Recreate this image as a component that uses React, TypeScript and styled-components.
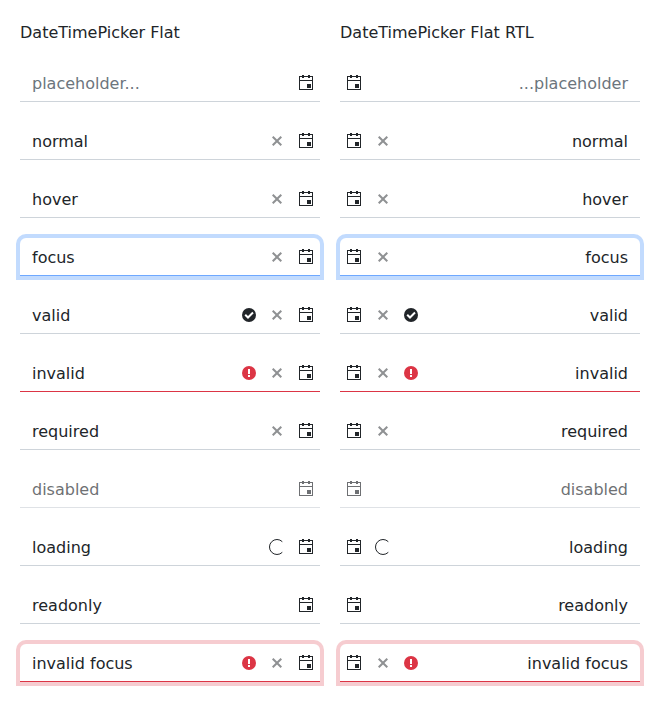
import React from 'react';
import styled, { createGlobalStyle, css } from 'styled-components';

const GlobalStyle = createGlobalStyle`
  body {
    margin: 0;
    background: #fff;
    color: #212529;
    font: 16px/24px "DejaVu Sans", sans-serif;
  }
`;

const Page = styled.main`
  display: grid;
  grid-template-columns: 300px 300px;
  gap: 20px;
  padding: 20px;
`;

const Column = styled.section`
  display: flex;
  flex-direction: column;
  gap: 20px;
`;

const Title = styled.div`
  box-sizing: border-box;
  height: 24px;
  padding-top: 1px;
`;

type Look = 'normal' | 'focus' | 'invalid' | 'disabled' | 'invalidFocus';

const looks = {
  normal: css``,
  focus: css`
    border-color: #6ea8ff;
    box-shadow: 0 0 0 4px rgba(13, 110, 253, 0.25);
  `,
  invalid: css`
    border-color: #dc3545;
  `,
  disabled: css`
    opacity: 0.65;
  `,
  invalidFocus: css`
    border-color: #dc3545;
    box-shadow: 0 0 0 4px rgba(220, 53, 69, 0.25);
  `,
};

const Field = styled.div<{ $look: Look }>`
  box-sizing: border-box;
  display: flex;
  align-items: center;
  height: 38px;
  border-bottom: 1px solid #ced4da;
  border-radius: 6px 6px 0 0;
  ${(p) => looks[p.$look]}
`;

const Value = styled.span<{ $placeholder?: boolean }>`
  flex: 1;
  padding: 2px 12px 0;
  color: ${(p) => (p.$placeholder ? '#6c757d' : 'inherit')};
`;

const Slot = styled.span<{ $width: number }>`
  display: flex;
  justify-content: center;
  width: ${(p) => p.$width}px;
  padding-top: 1px;
`;

const Icon = styled.svg`
  display: block;
  flex: none;
  width: 16px;
  height: 16px;
`;

const ClearIcon = styled(Icon)`
  opacity: 0.5;
`;

const Calendar = () => (
  <Icon viewBox="0 0 16 16" fill="currentColor">
    <path d="M1 1h3V0h2v1h4V0h2v1h3v14H1zM2 2v3h12V2h-2v1h-2V2H6v1H4V2zM2 6v8h12V6zM9 9h4v4H9z" fillRule="evenodd" />
  </Icon>
);

const Clear = () => (
  <ClearIcon viewBox="0 0 16 16" fill="currentColor">
    <path d="M13 4.416 11.584 3 8 6.584 4.416 3 3 4.416 6.584 8 3 11.584 4.416 13 8 9.416 11.584 13 13 11.584 9.416 8z" />
  </ClearIcon>
);

const Valid = () => (
  <Icon viewBox="0 0 16 16">
    <circle cx="8" cy="8" r="7" fill="#212529" />
    <path d="M4.2 7.7 7 10.5l5-5" fill="none" stroke="#fff" strokeWidth="2" />
  </Icon>
);

const Invalid = () => (
  <Icon viewBox="0 0 16 16">
    <circle cx="8" cy="8" r="7" fill="#dc3545" />
    <path d="M7 4h2v5H7zM7 10h2v2H7z" fill="#fff" />
  </Icon>
);

const Loading = () => (
  <Icon viewBox="0 0 16 16">
    <path d="M13.3 2.7a7.5 7.5 0 1 0 0 10.6" fill="none" stroke="currentColor" />
  </Icon>
);

interface Row {
  text: string;
  look?: Look;
  placeholder?: boolean;
  clear?: boolean;
  status?: 'valid' | 'invalid';
  loading?: boolean;
}

const rows: Row[] = [
  { text: 'placeholder...', placeholder: true },
  { text: 'normal', clear: true },
  { text: 'hover', clear: true },
  { text: 'focus', clear: true, look: 'focus' },
  { text: 'valid', clear: true, status: 'valid' },
  { text: 'invalid', clear: true, status: 'invalid', look: 'invalid' },
  { text: 'required', clear: true },
  { text: 'disabled', look: 'disabled' },
  { text: 'loading', loading: true },
  { text: 'readonly' },
  { text: 'invalid focus', clear: true, status: 'invalid', look: 'invalidFocus' },
];

const DateTimePicker = ({ text, look = 'normal', placeholder, clear, status, loading }: Row) => (
  <Field $look={look}>
    <Value $placeholder={placeholder}>{text}</Value>
    {status && <Slot $width={26}>{status === 'valid' ? <Valid /> : <Invalid />}</Slot>}
    {(clear || loading) && <Slot $width={30}>{clear ? <Clear /> : <Loading />}</Slot>}
    <Slot $width={28}>
      <Calendar />
    </Slot>
  </Field>
);

const Pickers = ({ title, rtl }: { title: string; rtl?: boolean }) => (
  <Column dir={rtl ? 'rtl' : 'ltr'}>
    <Title dir="ltr">{title}</Title>
    {rows.map((row) => (
      <DateTimePicker key={row.text} {...row} />
    ))}
  </Column>
);

export default function App() {
  return (
    <>
      <GlobalStyle />
      <Page>
        <Pickers title="DateTimePicker Flat" />
        <Pickers title="DateTimePicker Flat RTL" rtl />
      </Page>
    </>
  );
}
